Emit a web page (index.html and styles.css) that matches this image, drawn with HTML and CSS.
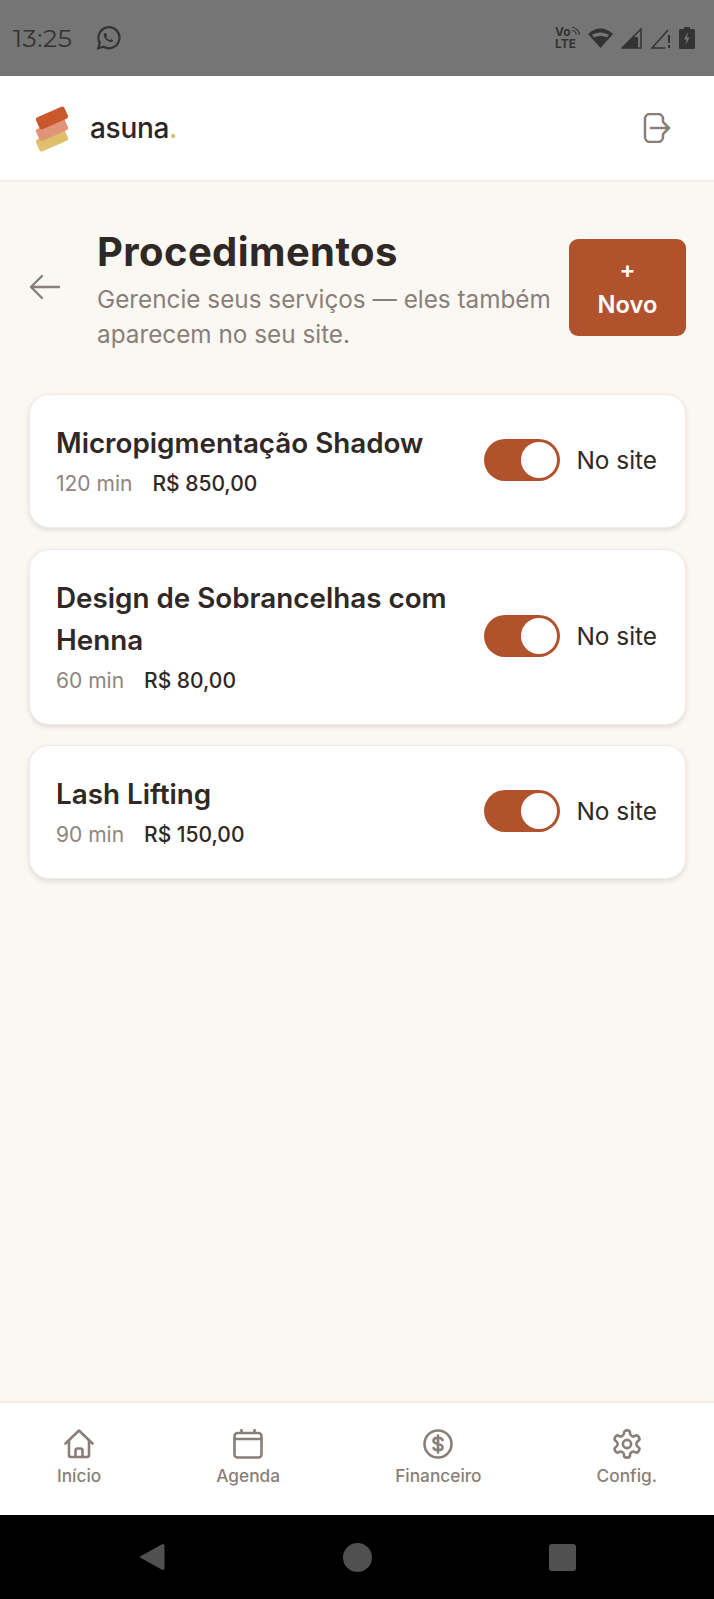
FILE: index.html
```html
<!DOCTYPE html>
<html lang="pt-BR">
<head>
<meta charset="utf-8">
<title>Procedimentos</title>
<link rel="stylesheet" href="styles.css">
</head>
<body>
<div class="app">
  <div class="status">
    <div class="status-left">
      <span class="clock">13:25</span>
      <svg class="wa" viewBox="0 0 24 24" width="26" height="26" fill="none" stroke="#333" stroke-width="2"><path d="M3 21.500l1.400-5.100A9.700 9.700 0 1 1 8 20.100z"/><path d="M8.600 7.600c-.9 1-.8 2.600.4 4.400 1.400 2 3.200 3.300 5 3.700 1.300.3 2.400-.2 2.800-1.400l-2.200-1.300-1 1c-1.400-.5-2.800-1.900-3.400-3.400l1-1-1.200-2.300z" fill="#333" stroke="none"/></svg>
    </div>
    <div class="status-right">
      <span class="volte"><span class="vo">Vo<svg viewBox="0 0 10 10" width="10" height="10" fill="none" stroke="#333" stroke-width="1.200"><path d="M1 1c4 0 8 4 8 8M1 4.500c2.500 0 4.500 2 4.500 4.500"/></svg></span><span>LTE</span></span>
      <svg viewBox="0 0 25 20" width="25" height="20"><path d="M12.500 20L0 6C7-1.500 18-1.500 25 6z" fill="#333"/><path d="M12.500 4.500c-3 0-6 1-8.600 2.300l2.200 2.600c2-1 4.200-1.500 6.400-1.500s4.400.5 6.400 1.500l2.200-2.600C18.500 5.500 15.500 4.500 12.500 4.500z" fill="#757575"/></svg>
      <svg viewBox="0 0 21 21" width="21" height="21"><path d="M1 20L20 1v19z" fill="none" stroke="#333" stroke-width="1.500"/><path d="M1 20l11-11h5v11z" fill="#333"/></svg>
      <svg viewBox="0 0 21 21" width="21" height="21" fill="none" stroke="#333" stroke-width="1.500"><path d="M18 2L2 20h13"/><path d="M19 7v8M19 17v3" stroke-width="2"/></svg>
      <svg viewBox="0 0 16 22" width="16" height="22"><path d="M5 0h6v2h3.500a1.500 1.500 0 0 1 1.500 1.500v17a1.500 1.500 0 0 1-1.500 1.500h-13A1.500 1.500 0 0 1 0 20.500v-17A1.500 1.500 0 0 1 1.500 2H5z" fill="#333"/><path d="M9 5l-4 7.500h2.500L6.500 18l4-7.500H8z" fill="#757575"/></svg>
    </div>
  </div>

  <header class="top">
    <div class="brand">
      <svg class="logo" viewBox="0 0 36 48" width="36" height="48">
        <rect x="2.500" y="29.500" width="31" height="13" rx="2.500" fill="#dfbe6c" transform="rotate(-24 18 36)"/>
        <rect x="2.500" y="19" width="31" height="13" rx="2.500" fill="#e09478" transform="rotate(-24 18 25.500)"/>
        <rect x="2.500" y="7.500" width="31" height="13" rx="2.500" fill="#c9582c" transform="rotate(-24 18 14)"/>
      </svg>
      <span class="brand-name">asuna<span class="dot">.</span></span>
    </div>
    <svg class="logout" viewBox="0 0 28 30" width="28" height="30" fill="none" stroke="#8a7f78" stroke-width="2.500" stroke-linecap="round" stroke-linejoin="round"><path d="M20 9V6a5 5 0 0 0-5-5H7a5 5 0 0 0-5 5v18a5 5 0 0 0 5 5h8a5 5 0 0 0 5-5v-3"/><path d="M8 15h18M21 10l5 5-5 5"/></svg>
  </header>

  <main class="content">
    <section class="page-head">
      <svg class="back" viewBox="0 0 32 26" width="32" height="26" fill="none" stroke="#8a7f78" stroke-width="2.400" stroke-linecap="round" stroke-linejoin="round"><path d="M30 13H2M13 2L2 13l11 11"/></svg>
      <div class="head-text">
        <h1>Procedimentos</h1>
        <p>Gerencie seus serviços — eles também aparecem no seu site.</p>
      </div>
      <button class="new-btn"><span>+</span><span>Novo</span></button>
    </section>

    <section class="cards">
      <article class="card">
        <div class="card-info">
          <h2>Micropigmentação Shadow</h2>
          <div class="meta"><span class="dur">120 min</span><span class="price">R$ 850,00</span></div>
        </div>
        <div class="toggle-wrap"><span class="toggle"><span class="knob"></span></span><span class="label">No site</span></div>
      </article>
      <article class="card">
        <div class="card-info">
          <h2>Design de Sobrancelhas com Henna</h2>
          <div class="meta"><span class="dur">60 min</span><span class="price">R$ 80,00</span></div>
        </div>
        <div class="toggle-wrap"><span class="toggle"><span class="knob"></span></span><span class="label">No site</span></div>
      </article>
      <article class="card">
        <div class="card-info">
          <h2>Lash Lifting</h2>
          <div class="meta"><span class="dur">90 min</span><span class="price">R$ 150,00</span></div>
        </div>
        <div class="toggle-wrap"><span class="toggle"><span class="knob"></span></span><span class="label">No site</span></div>
      </article>
    </section>
  </main>

  <nav class="tabs">
    <a class="tab">
      <svg viewBox="0 0 30 30" width="30" height="30" fill="none" stroke="#8a7f78" stroke-width="2.600" stroke-linecap="round" stroke-linejoin="round"><path d="M1.500 14.500L15 1.500l13.500 13"/><path d="M5 11.500V26a2 2 0 0 0 2 2h16a2 2 0 0 0 2-2V11.500"/><path d="M11.500 28v-6.500a2 2 0 0 1 2-2h3a2 2 0 0 1 2 2V28"/></svg>
      <span>Início</span>
    </a>
    <a class="tab">
      <svg viewBox="0 0 30 30" width="30" height="30" fill="none" stroke="#8a7f78" stroke-width="2.600" stroke-linecap="round" stroke-linejoin="round"><rect x="1.500" y="4" width="27" height="24.500" rx="3"/><path d="M1.500 10h27M8.500 1v3M21.500 1v3"/></svg>
      <span>Agenda</span>
    </a>
    <a class="tab">
      <svg viewBox="0 0 30 30" width="30" height="30" fill="none" stroke="#8a7f78" stroke-width="2.600" stroke-linecap="round" stroke-linejoin="round"><circle cx="15" cy="15" r="13.500"/><path d="M19.500 11c-.5-1.300-2.200-2.200-4.500-2.200-2.700 0-4.500 1.200-4.500 3s1.800 2.700 4.500 3.200 4.500 1.400 4.500 3.200-1.800 3-4.500 3c-2.300 0-4-.9-4.500-2.200M15 6.500v17"/></svg>
      <span>Financeiro</span>
    </a>
    <a class="tab">
      <svg viewBox="1 1 22 22" width="30" height="30" fill="none" stroke="#8a7f78" stroke-width="1.900" stroke-linecap="round" stroke-linejoin="round"><path d="M12.220 2h-.44a2 2 0 0 0-2 2v.18a2 2 0 0 1-1 1.730l-.43.250a2 2 0 0 1-2 0l-.15-.08a2 2 0 0 0-2.730.730l-.22.380a2 2 0 0 0 .730 2.730l.15.100a2 2 0 0 1 1 1.720v.510a2 2 0 0 1-1 1.740l-.15.090a2 2 0 0 0-.73 2.730l.22.380a2 2 0 0 0 2.730.730l.15-.08a2 2 0 0 1 2 0l.43.250a2 2 0 0 1 1 1.730V20a2 2 0 0 0 2 2h.44a2 2 0 0 0 2-2v-.18a2 2 0 0 1 1-1.730l.43-.25a2 2 0 0 1 2 0l.15.08a2 2 0 0 0 2.730-.73l.22-.39a2 2 0 0 0-.73-2.730l-.15-.08a2 2 0 0 1-1-1.740v-.5a2 2 0 0 1 1-1.740l.15-.09a2 2 0 0 0 .73-2.730l-.22-.38a2 2 0 0 0-2.730-.73l-.15.08a2 2 0 0 1-2 0l-.43-.25a2 2 0 0 1-1-1.730V4a2 2 0 0 0-2-2z"/><circle cx="12" cy="12" r="3"/></svg>
      <span>Config.</span>
    </a>
  </nav>

  <div class="sysnav">
    <svg viewBox="0 0 28 30" width="28" height="30"><path d="M2 15L24.500 2.500a1 1 0 0 1 1.500 1v23a1 1 0 0 1-1.500 1z" fill="#505050" stroke="#505050" stroke-linejoin="round" stroke-width="1"/></svg>
    <span class="sys-circle"></span>
    <span class="sys-square"></span>
  </div>
</div>
</body>
</html>
```

FILE: styles.css
```css
* { box-sizing: border-box; margin: 0; padding: 0; }
html, body { height: 100%; }
body { font-family: Inter, "Liberation Sans", sans-serif; background: #fbf8f4; color: #2f2825; }
.app { width: 714px; height: 1599px; display: flex; flex-direction: column; overflow: hidden; }

.status { height: 76px; flex: none; background: #757575; display: flex; justify-content: space-between; align-items: center; padding: 0 19px 0 13px; color: #333; }
.status-left { display: flex; align-items: center; gap: 23px; }
.clock { font-family: Montserrat, "Open Sans", sans-serif; font-size: 25px; letter-spacing: .5px; }
.status-right { display: flex; align-items: center; gap: 8px; }
.volte { display: flex; flex-direction: column; font-size: 12px; font-weight: 700; line-height: 12px; color: #333; width: 25px; }
.vo { display: flex; align-items: flex-start; }

.top { height: 106px; flex: none; background: #fff; border-bottom: 2px solid #f1ede8; display: flex; justify-content: space-between; align-items: center; padding: 0 43px 0 34px; }
.brand { display: flex; align-items: center; gap: 20px; }
.brand-name { font-size: 28px; font-weight: 500; letter-spacing: -.3px; color: #2b2725; }
.dot { color: #dfb95f; }

.content { flex: 1; padding: 40px 28px 0 29px; }
.page-head { display: flex; align-items: center; }
.back { flex: none; margin-right: 36px; }
.head-text { flex: 1; min-width: 0; }
h1 { font-size: 40px; line-height: 59px; font-weight: 700; letter-spacing: .4px; color: #2f2825; }
.head-text p { font-size: 24.3px; line-height: 35px; color: #8a7f78; margin-top: 1px; }
.new-btn { flex: none; width: 117px; height: 97px; margin-left: 12px; background: #b0532c; border: 0; border-radius: 9px; color: #fff; font: 600 23.700px/35px Inter, sans-serif; display: flex; flex-direction: column; align-items: center; justify-content: center; }

.cards { margin-top: 42px; display: flex; flex-direction: column; gap: 20.500px; }
.card { background: #fff; border: 1px solid #f0ebe6; border-radius: 20px; box-shadow: 0 2px 5px rgba(60,40,30,.14); padding: 27px 28px 26px 26px; display: flex; justify-content: space-between; gap: 30px; }
.card-info { flex: 1; min-width: 0; }
h2 { font-size: 27.800px; line-height: 42px; font-weight: 600; color: #2f2825; }
.meta { display: flex; gap: 20px; font-size: 21px; line-height: 34px; margin-top: 3px; }
.dur { color: #8f857e; }
.price { color: #2f2825; font-weight: 500; }
.toggle-wrap { flex: none; display: flex; align-items: center; gap: 16px; margin-bottom: 3px; }
.toggle { width: 76px; height: 42px; border-radius: 21px; background: #b0532c; padding: 3px; display: flex; justify-content: flex-end; }
.knob { width: 36px; height: 36px; border-radius: 50%; background: #fff; }
.label { font-size: 24.400px; color: #2f2825; }

.tabs { height: 114px; flex: none; background: #fff; border-top: 2px solid #f1ece7; display: flex; justify-content: space-between; padding: 26px 57px 0 57px; }
.tab { display: flex; flex-direction: column; align-items: center; gap: 6px; color: #8a7f78; font-size: 17.300px; font-weight: 500; line-height: 22px; }
.sysnav { height: 84px; flex: none; background: #000; display: flex; align-items: center; justify-content: space-between; padding: 0 138px; }
.sys-circle { width: 29px; height: 29px; border-radius: 50%; background: #505050; }
.sys-square { width: 27px; height: 27px; border-radius: 3px; background: #505050; }
```
